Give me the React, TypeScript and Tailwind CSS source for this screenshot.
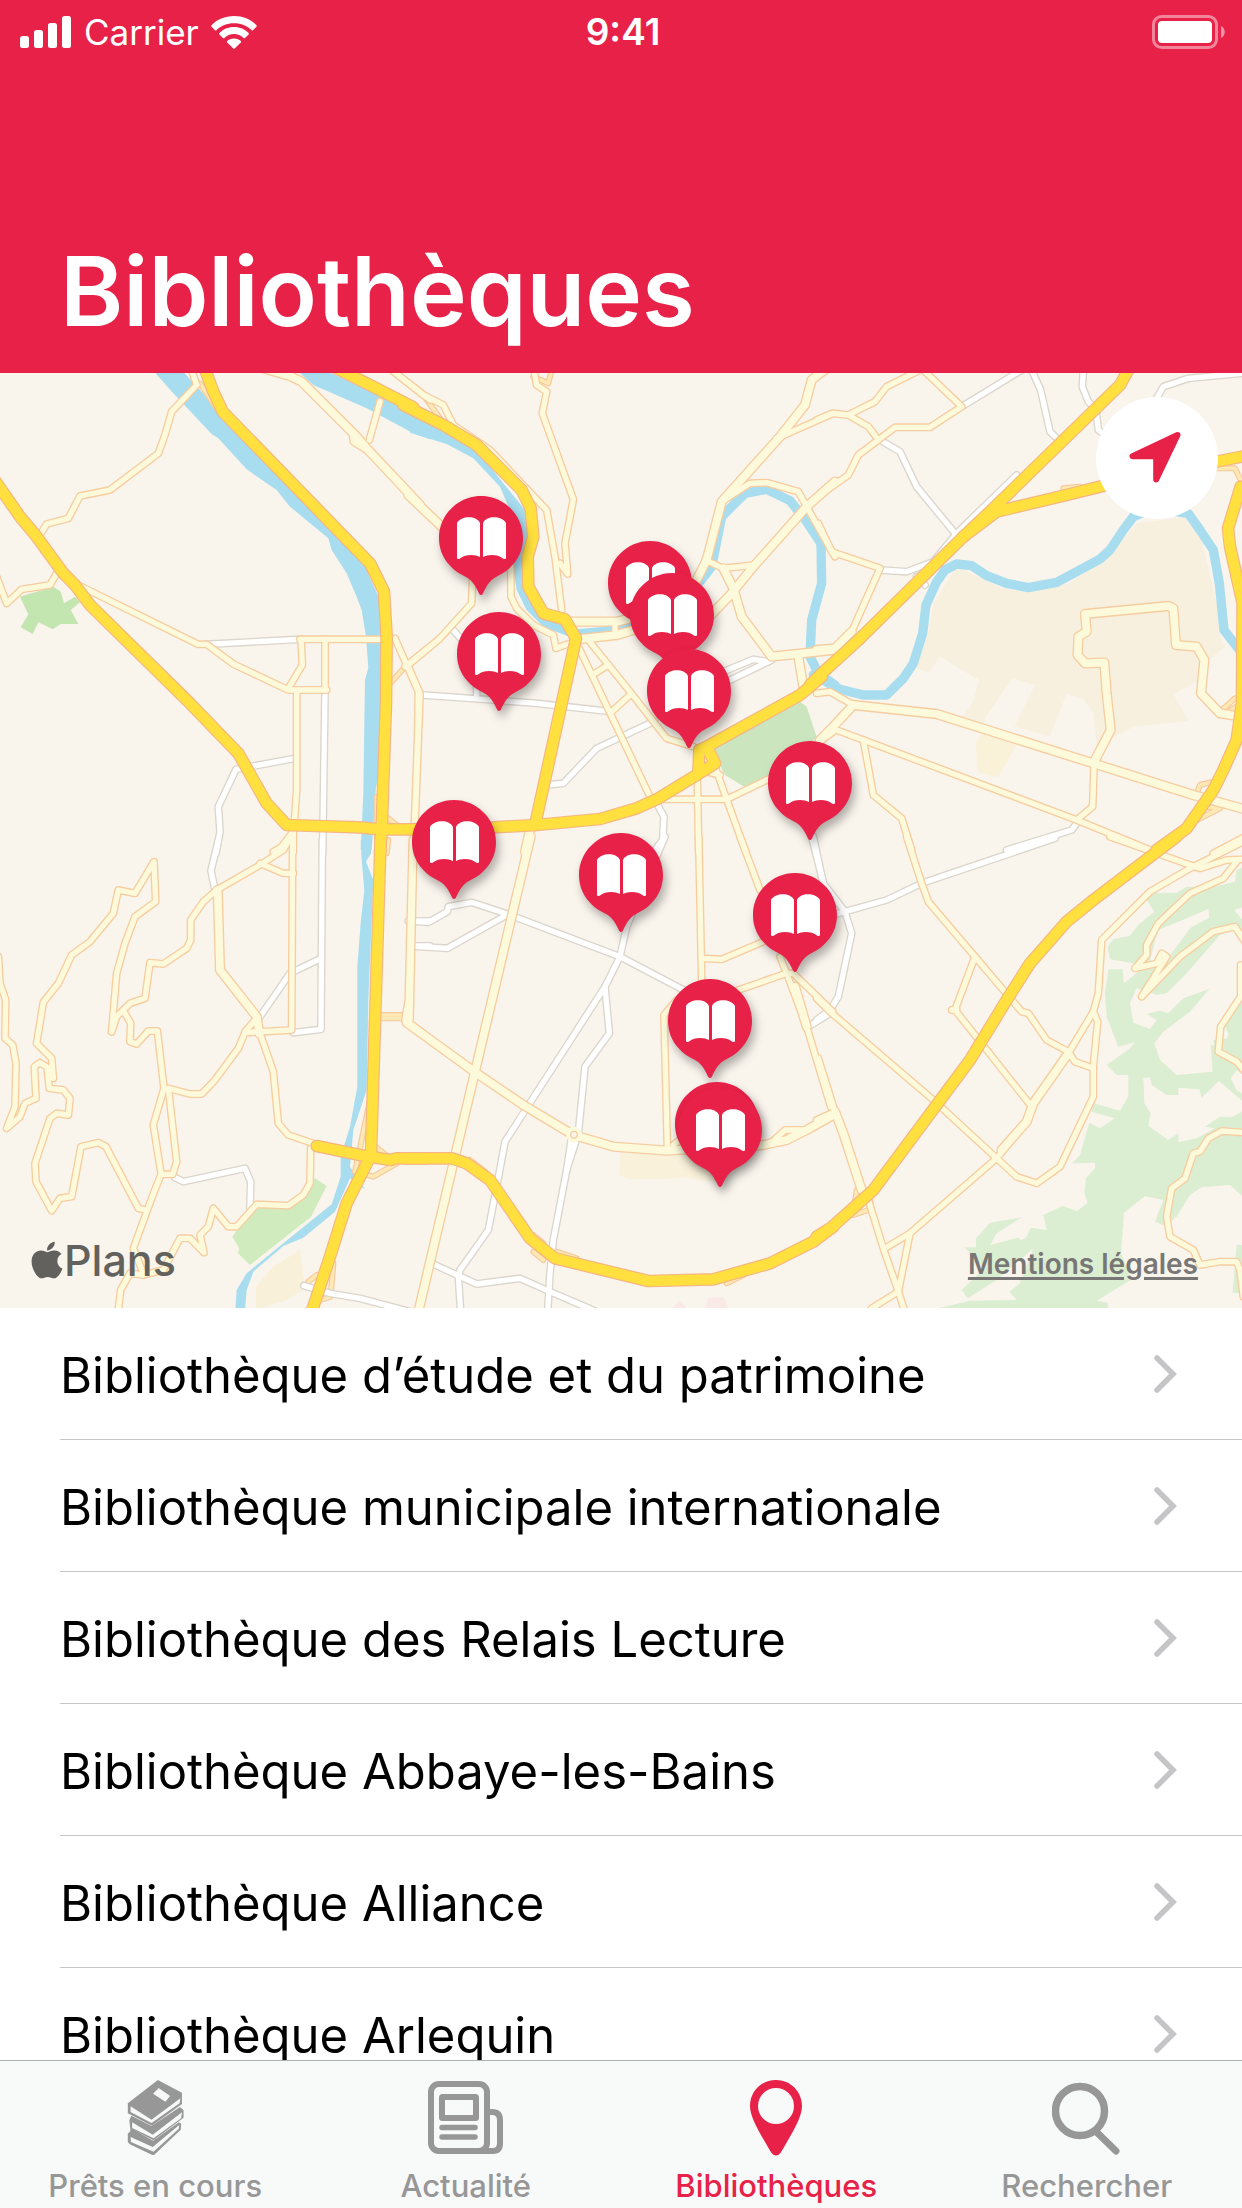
import React from "react";
import { FaApple } from "react-icons/fa";

type Tile = {
  x: number;
  y: number;
  water: string[];
  stream: string[];
  areas: [string, string][];
  link: string[];
  white: string[];
  cream: string[];
  wide: string[];
  yellow: string[];
};

/* Map tiles: coordinates are in thirds of a map pixel, from the tile's own corner. */
const tiles: Tile[] = [
  {
    x: 0,
    y: 0,
    water: [
      "458,0 545,0 600,60 650,120 1095,590 1140,690 1150,800 1140,1200 1128,1250 1115,1440 1082,1440 1090,1270 1095,930 1105,893 1098,800 1085,720 1070,680 1040,610 995,540 985,505 870,410 830,360 740,298 655,205 635,192 520,70",
      "890,0 975,0 1080,50 1290,150 1290,208 1240,190 1100,115 940,45",
    ],
    stream: [],
    areas: [["60,680 160,650 182,665 192,700 225,680 240,697 212,720 235,762 182,762 158,778 115,757 98,792 62,772 85,733", "#c3e6b1"]],
    link: ["600,40 650,115", "1130,1280 1130,1400", "1165,1345 1190,1365", "1220,885 1175,935"],
    white: ["620,823 900,808", "975,965 968,1450", "885,1165 750,1190 708,1198 655,1310 660,1385 648,1450"],
    cream: [
      "590,45 515,125 495,195 475,250 330,360 240,378 205,445 140,462 120,495",
      "575,0 590,45",
      "1140,95 1108,210",
      "1058,195 1060,215 1100,240",
      "1175,0 1290,90",
      "-10,620 20,700 65,658 150,645 170,610",
      "240,648 595,823 620,823 700,882 865,960 980,960",
      "900,808 1160,808",
      "903,808 907,885 865,955",
      "975,808 975,960",
      "890,960 890,1260 883,1360",
      "1185,805 1220,885 1255,965 1253,1100 1243,1370",
      "1290,830 1215,890",
      "875,1390 845,1430 820,1445",
      "880,1385 880,1445",
    ],
    wide: ["790,-5 870,18 905,35 1070,200 1100,235 1260,405"],
    yellow: [
      "-20,325 60,440 110,500 190,610 225,645 270,705 570,1000 715,1150 800,1300 860,1365 1080,1372 1145,1378 1270,1378",
      "612,-10 640,65 668,125 1110,580 1152,665 1160,800 1158,1000 1145,1378 1140,1450",
      "1000,-10 1130,55 1240,112",
    ],
  },
  {
    x: 410,
    y: 0,
    water: [
      "0,130 200,240 345,420 355,510 335,560 345,650 390,730 460,760 500,778 605,768 605,783 520,796 470,797 400,770 350,720 320,660 310,600 320,500 300,420 270,350 190,265 110,222 0,188",
    ],
    stream: ["600,780 720,745 850,660 905,590 935,440 1005,370 1070,358 1140,392 1190,455 1233,520 1235,640 1205,750 1200,860 1225,910 1275,945"],
    areas: [["905,1140 1170,995 1190,1010 1220,1100 1150,1180 1005,1252 945,1215", "#cbe5bf"]],
    link: ["40,75 90,145", "370,20 415,40 425,0"],
    white: [
      "125,775 165,820",
      "35,975 180,985 380,1000 595,1024",
      "200,940 200,985",
      "735,1053 560,1135 460,1240 410,1245",
      "940,905 1030,868 1075,875",
      "940,940 1085,870",
      "740,1300 762,1340 758,1410 735,1440",
    ],
    cream: [
      "-30,20 40,75 100,105 130,165 240,240 410,420 435,560 455,720",
      "372,0 380,45 410,65 397,130 490,388 465,520 473,612 450,580",
      "190,560 185,700 90,805 0,880",
      "-5,890 30,970 15,1370",
      "302,590 303,680 320,715 370,765 430,795 438,835 480,820",
      "935,395 1020,340 1070,338 1165,365 1190,410 1275,560",
      "1100,205 1270,130",
      "885,570 940,595 1035,585",
      "505,830 720,1280",
      "535,810 660,965 770,1105 850,1130",
      "555,910 595,885",
      "605,1025 660,975",
      "740,1288 950,1288 1080,1225 1270,1085",
      "862,1215 866,1445",
      "915,1190 950,1288 1007,1445",
      "870,1200 930,1215",
      "615,755 615,795",
    ],
    wide: [
      "-5,375 100,475 150,520",
      "480,755 620,755 700,735",
      "500,808 620,795 720,765",
      "850,650 890,570 935,395 1110,200 1185,105 1205,30 1240,0",
      "860,780 965,670 1030,590 1190,410 1275,335",
      "940,595 970,655 995,740 1085,860 1270,840",
      "1165,860 1180,950",
      "362,1370 345,1445",
    ],
    yellow: [
      "-20,105 100,165 200,225 335,360 362,415 370,500 353,560 355,650 400,730 465,748 498,805 375,1365",
      "0,1378 250,1372 380,1365 570,1347 680,1315 740,1288 860,1215 915,1180 890,1130",
      "865,1210 868,1140 890,1130 1170,975 1235,920",
    ],
  },
  {
    x: 820,
    y: 0,
    water: [],
    stream: [
      "-20,915 60,958 130,975 200,975 250,925 280,880 308,790 318,705 350,635 375,600 410,582 455,587 500,617 560,640 625,653 710,637 780,600 840,567 870,540 910,480 940,440 1000,415 1105,430 1140,480 1180,540 1198,640 1212,780 1258,840",
    ],
    areas: [
      [
        "405,600 430,600 545,655 625,668 750,640 870,555 950,460 1100,440 1145,510 1195,720 1200,800 1215,830 1165,870 1140,930 1060,972 1105,1052 940,1070 905,1088 830,1130 820,1025 790,988 740,970 690,1098 583,1070 645,945 577,925 495,1045 490,1070 425,1043 458,1000 478,930 425,900 360,858 327,908 290,893 325,790 340,700",
        "#f7f0df",
      ],
      ["490,1090 468,1115 472,1205 533,1222 590,1125", "#faf1d9"],
    ],
    link: ["1190,295 1245,295 1262,330", "1130,1270 1140,1245 1180,1235", "1130,1350 1200,1315 1150,1310", "1200,1025 1245,985", "1210,1035 1250,1010", "730,355 780,350"],
    white: [
      "425,110 605,0",
      "635,0 662,60 690,185 705,200",
      "790,0 787,50 805,95 828,120 835,180 860,200",
      "1010,85 1030,50 1105,25 1266,10",
      "180,210 240,245 290,350 405,490",
      "180,600 260,605 340,575 410,490 590,315",
      "290,620 315,645",
      "770,1360 755,1380 560,1440",
    ],
    cream: [
      "-10,150 35,130 85,135 165,95 200,50 300,0",
      "305,-5 425,110 330,172 225,172 175,210 115,255 85,315 -10,382",
      "-15,25 20,0",
      "85,135 145,170 175,210",
      "-5,460 35,545 180,595 95,785",
      "35,1075 130,1110 770,1350 990,1440",
      "130,1110 160,1275 245,1345 275,1440",
      "1275,1400 1180,1450",
      "822,1190 818,1310 770,1350",
      "-10,970 30,965 100,1005",
    ],
    wide: [
      "95,785 45,835 -10,840",
      "100,1005 350,1032 820,1180 1120,1275",
      "1120,1275 1275,1318",
      "100,1005 35,1075 0,1110",
      "820,1180 872,1080 860,970 853,878 795,880 773,855 775,800 800,785 795,732 1045,708 1060,715 1068,825 1130,830 1153,870 1143,970 1200,1030 1250,1038",
    ],
    yellow: [
      "-30,945 0,915 110,815 430,500 520,415 900,45 925,0",
      "430,500 530,425 760,370 860,345 1190,275 1275,258",
      "1262,350 1224,475 1230,530 1268,700 1266,1000 1250,1110 1210,1200 1180,1260 1100,1375 1010,1440",
    ],
  },
  {
    x: 0,
    y: 470,
    water: [
      "1082,0 1115,0 1113,40 1098,65 1120,120 1105,480 1100,750 1060,870 1050,980 1095,1048 1050,1015 1005,1115 910,1193 850,1218 760,1295 740,1350 735,1410 706,1410 710,1350 740,1300 850,1210 995,1093 1022,1010 1022,950 1050,860 1072,740 1072,380 1082,250 1093,150 1085,60",
    ],
    stream: [],
    areas: [
      ["945,1015 980,1038 933,1130 750,1275 714,1240 718,1225 697,1190 760,1100 870,1090 930,1040", "#d0ebbd"],
      ["768,1340 820,1280 900,1230 912,1320 910,1350 860,1380 790,1403 768,1403", "#f9f0da"],
    ],
    link: ["1140,535 1215,535", "1145,525 1215,525", "1110,780 1065,995 1120,1010 1190,970 1120,915", "1000,1270 992,1370 960,1380", "925,1325 950,1305", "1165,0 1160,40"],
    white: [
      "655,0 633,92 645,150",
      "967,0 963,568 880,578",
      "963,355 870,400 780,530",
      "525,1013 550,1025 735,985 752,1025 750,1105",
      "912,1337 990,1360 1080,1375 1230,1415",
      "1225,243 1290,243",
      "1240,318 1290,318",
    ],
    cream: [
      "335,575 350,400 375,310 405,230 467,185 462,65 405,160 355,150 340,220 270,305 215,345 175,430 130,487 110,610 155,655 160,715 140,680 120,668 103,680 108,775 75,790 60,830 20,865 45,800 48,670 38,615 15,595 17,480 0,430 -5,350",
      "142,690 148,745 190,750 210,775 205,825 170,820 150,835 105,970 108,1025 155,1112 180,1075 215,1070 243,920 295,908 318,920 415,1105 430,1108",
      "335,575 350,530 390,490 435,475 450,368 490,372 560,325 572,300 572,240 610,185 650,150 780,75 850,30 870,-5",
      "375,520 392,550 390,605 410,612 445,573 472,573 492,745 460,855 483,1000",
      "483,1003 455,1075 400,1225 430,1300",
      "390,1300 362,1350 355,1410",
      "780,70 850,100 880,100",
      "878,-10 875,570 735,578 715,625 645,720 605,762 570,762 505,745 530,965 518,1003 483,1003",
      "780,580 820,695 835,850 865,885 945,912",
      "932,925 930,1030 910,1065 865,1097 770,1093 710,1160 685,1160 640,1105 625,1160 600,1185 612,1238 570,1195 540,1195 490,1290 430,1305 390,1300",
      "735,575 770,535",
      "1237,0 1225,480 1215,540 1270,580",
      "1265,1360 1255,1410",
    ],
    wide: ["653,150 660,390 770,530 778,580"],
    yellow: ["1142,-10 1113,940 1108,955 1040,1090 990,1250 935,1415", "950,918 1080,945 1170,960 1190,955 1280,955"],
  },
  {
    x: 410,
    y: 470,
    water: [],
    stream: [],
    areas: [
      ["632,935 900,945 930,1022 885,1022 830,1012 760,1018 655,1018 628,1005", "#f9f1da"],
      ["788,1405 808,1382 832,1405", "#faeae7"],
      ["885,1405 895,1375 940,1370 955,1405", "#faeae7"],
    ],
    link: ["180,960 225,995", "370,1185 400,1210", "440,1235 500,1255", "400,1260 370,1235", "950,1330 1000,1305"],
    white: [
      "0,243 55,247 112,215 115,200 185,187 300,225 630,350 830,455",
      "0,318 112,325 290,225",
      "765,-10 650,260 630,350 585,440 285,905 260,1040 235,1170 150,1290 145,1310 152,1415",
      "585,440 598,580 525,680 505,880 470,990 430,1200 420,1300 413,1415",
      "485,890 470,990",
      "65,1270 200,1332 330,1315 420,1355 560,1415",
      "1205,-10 1240,130",
      "1195,560 1260,520",
    ],
    cream: [
      "12,-10 0,540",
      "866,-10 875,420",
      "875,355 935,358 1060,305",
      "800,480 762,525 772,920",
      "985,450 1130,400 1150,400 1268,515",
      "990,-10 1050,150",
      "1110,350 1130,400 1190,560 1262,800",
      "1080,912 1125,870 1190,870",
      "790,915 820,890",
    ],
    wide: ["-10,548 200,700 340,795 490,885 610,920 770,932 1060,915 1130,900 1190,870 1270,825", "362,-10 305,230 130,970 25,1415", "1155,440 1190,560"],
    yellow: ["-10,955 125,955 170,970 240,1020 360,1195 435,1255 715,1323 910,1318 1080,1270 1210,1205 1270,1160"],
  },
  {
    x: 820,
    y: 470,
    water: [],
    stream: [],
    areas: [
      [
        "1275,80 1250,90 1245,125 1180,140 1100,140 1070,158 985,158 980,180 1003,215 955,255 930,287 880,298 863,320 870,358 940,370 955,395 912,430 908,388 865,388 855,460 860,530 895,620 945,607 930,625 860,675 890,705 925,705 925,770 900,812 820,790 815,815 885,835 840,865 808,848 780,945 757,970 825,968 825,985 798,1015 793,1060 803,1088 772,1113 728,1098 670,1125 680,1170 632,1163 620,1190 530,1250 425,1350 443,1375 530,1320 640,1225 600,1330 568,1355 590,1380 450,1382 355,1405 865,1405 863,1388 830,1382 935,1318 903,1240 912,1118 975,1068 1030,1080 1005,1145 1035,1158 1070,1130 1110,1065 1145,1042 1230,1035 1275,1075",
        "#dbeed2",
      ],
      ["433,1222 468,1222 468,1195 510,1148 605,1132 530,1180 510,1215 595,1193 620,1215 500,1290", "#dbeed2"],
      ["1250,1215 1275,1215 1275,1360 1238,1358", "#dbeed2"],
      ["1015,270 1100,235 1165,207 1168,233 1110,265 1070,320 1030,370 985,380 1000,320", "#f9f4ec"],
      ["950,445 1010,465 1040,460 1100,400 1200,285 1245,270 1275,320 1275,500 1228,570 1215,620 1172,615 1178,695 1070,705 1020,660 1003,610 1030,575 1110,515 1168,447 1090,475 1045,520 1020,512 980,522 1010,540 990,567 940,548 930,490", "#f9f4ec"],
      ["970,715 990,712 995,735 1040,765 1075,765 1075,743 1138,748 1145,773 1197,723 1275,790 1275,810 1235,832 1200,830 1155,860 1185,865 1130,895 1075,907 1075,880 1045,900 985,858 992,820 973,790", "#f9f4ec"],
      ["1150,15 1275,75 1275,80 1215,60", "#f9f4ec"],
      ["1243,210 1275,200 1275,250", "#f9f4ec"],
      ["833,780 870,710 885,725 857,765 905,795 890,810 850,790", "#f9f4ec"],
      ["1180,600 1235,595 1275,615 1275,670 1240,710 1200,690", "#dbeed2"],
      ["1232,715 1250,690 1275,710 1275,765 1250,750", "#f9f4ec"],
      ["1245,490 1275,470 1275,610 1235,600 1215,560", "#dbeed2"],
    ],
    link: ["110,1050 100,1125 145,1110", "150,1070 155,1110"],
    white: ["705,-5 305,130 200,180 75,215 0,235", "-20,-10 10,130 75,215 95,280 55,470 30,510 -10,540"],
    cream: [
      "260,-10 305,130 325,185 465,350 605,515 625,520 680,600 745,635 765,665 820,685",
      "465,350 405,510 635,800",
      "-10,475 30,515 340,780 530,955 590,1010 650,1030 720,980 820,770 820,680 833,545 820,515 745,640",
      "600,870 530,955 270,1180 195,1225",
      "820,515 835,460 845,300 990,155 1110,85 1270,5",
      "870,-10 1110,75 1140,85 1220,60 1275,58",
      "1250,65 1210,115 1110,160 1015,250 980,315 980,345 945,385 1010,370 1025,340 1040,350 965,470 1080,350 1180,275 1245,260 1275,305",
      "-5,655 45,815",
      "145,1080 190,1225 235,1355 255,1415",
      "-10,840 45,815",
      "270,1180 235,1355 155,1405",
      "1262,375 1262,470 1202,560 1195,635 1250,665 1275,695",
      "1275,878 1205,873 1165,895 1140,935 1120,940 1095,1015 1055,1045 1040,1130 1050,1190 1120,1230 1140,1275 1200,1265 1250,1265 1260,1290 1270,1370",
      "395,510 410,510",
    ],
    wide: ["45,815 70,880 125,1050", "745,640 640,790 620,845 545,930"],
    yellow: ["-10,1190 35,1162 160,1050 450,660 560,480 630,370 740,245 820,180 1070,-10"],
  },
];

const tileShift = (t: Tile) => `translate(${t.x} ${t.y - 3}) scale(0.33333)`;

function Roads({ kind, color, width }: { kind: "stream" | "link" | "white" | "cream" | "wide" | "yellow"; color: string; width: number }) {
  return (
    <g fill="none" stroke={color} strokeWidth={width} strokeLinejoin="round" strokeLinecap="round">
      {tiles.map((t, i) => (
        <g key={i} transform={tileShift(t)}>
          {t[kind].map((p, j) => (
            <polyline key={j} points={p} />
          ))}
        </g>
      ))}
    </g>
  );
}

function MapDrawing() {
  return (
    <svg viewBox="0 0 1242 935" preserveAspectRatio="xMidYMid slice" className="block h-full w-full" aria-hidden="true">
      <rect width="1242" height="935" fill="#f9f4ec" />
      {tiles.map((t, i) => (
        <g key={i} transform={tileShift(t)}>
          {t.areas.map(([p, fill], j) => (
            <polygon key={j} points={p} fill={fill} />
          ))}
          {t.water.map((p, j) => (
            <polygon key={j} points={p} fill="#a8dcef" />
          ))}
        </g>
      ))}
      <Roads kind="stream" color="#a8dcef" width={28} />
      <Roads kind="link" color="#f6c99c" width={18} />
      <Roads kind="link" color="#fee9b4" width={11} />
      <Roads kind="white" color="#dbd6cc" width={24} />
      <Roads kind="white" color="#ffffff" width={16} />
      <Roads kind="wide" color="#f6cda0" width={31} />
      <Roads kind="cream" color="#f6cda0" width={24} />
      <Roads kind="wide" color="#fdfadb" width={23} />
      <Roads kind="cream" color="#fdfadb" width={16} />
      <g transform="translate(410 467) scale(0.33333)">
        <circle cx="492" cy="884" r="24" fill="#fdfadb" />
        <circle cx="492" cy="884" r="10" fill="#f9f4ec" stroke="#f6cda0" strokeWidth="4" />
      </g>
      <Roads kind="yellow" color="#f6b583" width={38} />
      <Roads kind="yellow" color="#ffe03f" width={31} />
    </svg>
  );
}

const pins = [
  { name: "Saint-Laurent", x: 481, y: 538 },
  { name: "Centre de ressources", x: 499, y: 654 },
  { name: "Étude et patrimoine", x: 650, y: 583 },
  { name: "Municipale internationale", x: 672, y: 615 },
  { name: "Centre-ville", x: 689, y: 691 },
  { name: "Abbaye-les-Bains", x: 810, y: 783 },
  { name: "Eaux-Claires", x: 454, y: 842 },
  { name: "Alliance", x: 621, y: 875 },
  { name: "Teisseire", x: 795, y: 915 },
  { name: "Relais Lecture", x: 710, y: 1021 },
  { name: "Kateb Yacine", x: 717, y: 1124 },
  { name: "Arlequin", x: 720, y: 1130 },
];

function MapPin({ name, x, y }: { name: string; x: number; y: number }) {
  return (
    <button
      type="button"
      aria-label={name}
      className="absolute -translate-x-1/2 -translate-y-[42px]"
      style={{ left: `${(x / 1242) * 100}%`, top: `${((y - 373) / 935) * 100}%` }}
    >
      <svg width="84" height="100" viewBox="0 0 84 100" className="block overflow-visible drop-shadow-[3px_6px_5px_rgba(0,0,0,0.3)]">
        <path
          d="M42 0C65 0 84 19 84 42C84 61 72 74 57 81C50 85 47 91 44 97.500Q42 100.500 40 97.500C37 91 34 85 27 81C12 74 0 61 0 42C0 19 19 0 42 0Z"
          fill="#e82148"
        />
        <path d="M18 27C22 20 37 19 41 27V61C36 58 26 58 21 62.500Q18 64 18 61.500Z" fill="#fff" />
        <path d="M67 27C63 20 48 19 44 27V61C49 58 59 58 64 62.500Q67 64 67 61.500Z" fill="#fff" />
      </svg>
    </button>
  );
}

function StatusBar() {
  return (
    <div className="grid grid-cols-3 items-center pt-3 pr-4 pl-5">
      <div className="flex items-center gap-3">
        <svg width="52" height="32" viewBox="0 0 52 32" fill="#fff" role="img" aria-label="Signal">
          <rect x="0" y="0" width="0" height="0" />
          <rect x="0" y="20" width="9" height="12" rx="2.500" />
          <rect x="14" y="14" width="9" height="18" rx="2.500" />
          <rect x="28" y="7" width="9" height="25" rx="2.500" />
          <rect x="42" y="0" width="9" height="32" rx="2.500" />
        </svg>
        <span className="text-[35px] leading-10 font-normal">Carrier</span>
        <svg width="46" height="33" viewBox="0 0 46 33" fill="#fff" role="img" aria-label="Wi-Fi">
          <path d="M23 0C32 0 40 3.500 45.500 9.200Q46 10 45.400 10.700L42 14.200Q41.300 14.800 40.600 14.200C36 9.800 30 7.300 23 7.300S10 9.800 5.400 14.200Q4.700 14.800 4 14.200L.6 10.700Q0 10 .5 9.200C6 3.500 14 0 23 0Z" />
          <path d="M23 11C29 11 34 13.300 37.600 17Q38.200 17.700 37.600 18.400L34 22Q33.300 22.600 32.600 22C30 19.500 26.800 18 23 18S16 19.500 13.400 22Q12.700 22.600 12 22L8.400 18.400Q7.800 17.700 8.400 17C12 13.300 17 11 23 11Z" />
          <path d="M23 22.500C26 22.500 28.200 23.500 29.800 25Q30.400 25.700 29.800 26.400L23.700 32.600Q23 33.200 22.300 32.600L16.200 26.400Q15.600 25.700 16.200 25C17.800 23.500 20 22.500 23 22.500Z" />
        </svg>
      </div>
      <span className="text-center text-[37px] leading-10 font-semibold">9:41</span>
      <svg width="74" height="34" viewBox="0 0 74 34" className="justify-self-end" role="img" aria-label="Batterie">
        <rect x="1.500" y="1.500" width="63" height="31" rx="8" fill="none" stroke="#fff" strokeOpacity="0.45" strokeWidth="3" />
        <rect x="6" y="6" width="54" height="22" rx="4" fill="#fff" />
        <path d="M69 11C74 13 74 21 69 23Z" fill="#fff" fillOpacity="0.5" />
      </svg>
    </div>
  );
}

const libraries = [
  "Bibliothèque d’étude et du patrimoine",
  "Bibliothèque municipale internationale",
  "Bibliothèque des Relais Lecture",
  "Bibliothèque Abbaye-les-Bains",
  "Bibliothèque Alliance",
  "Bibliothèque Arlequin",
];

function LibraryRow({ name }: { name: string }) {
  return (
    <li className="pl-[60px]">
      <a href="#" className="flex h-[132px] items-center justify-between border-b border-[#c6c6c8] pr-16">
        <span className="pt-1 text-[49px] leading-[60px] whitespace-nowrap text-black">{name}</span>
        <svg width="24" height="38" viewBox="0 0 24 38" fill="none" aria-hidden="true">
          <path d="M3 3L19 19L3 35" stroke="#c5c5c7" strokeWidth="5.500" strokeLinecap="round" strokeLinejoin="miter" />
        </svg>
      </a>
    </li>
  );
}

function BooksIcon() {
  return (
    <svg width="57" height="76" viewBox="0 0 57 76" aria-hidden="true">
      <g transform="scale(0.39540 0.33333) translate(-321 -119)">
        <path d="M323 280L329 273L330 262L387 301L452 246L458 250L457 268L390 343L385 344L328 312L323 304Z" fill="currentColor" />
        <path d="M330 290L386 320L453 254L452 265L388 334L331 305Z" fill="#f7f8f8" />
        <path d="M327 240L332 226L383 257L455 200L464 210V232L388 300L329 264Z" fill="currentColor" />
        <path d="M334 246L386 283L460 216L458 234L388 294L334 263Z" fill="#f7f8f8" />
        <path d="M399 119L460 157V191L384 256L323 219V189Z" fill="currentColor" />
        <path d="M330 198L383 238L456 174L454 189L383 248L330 215Z" fill="#f7f8f8" />
        <path d="M401 143L430 167L418 184L387 160Z" fill="#f7f8f8" />
      </g>
    </svg>
  );
}

function NewsIcon() {
  return (
    <svg width="76" height="76" viewBox="0 0 76 76" fill="none" stroke="currentColor" strokeWidth="6" aria-hidden="true">
      <rect x="3" y="4" width="56" height="67" rx="8" />
      <rect x="14" y="17" width="34" height="21" rx="0.500" />
      <path d="M14 47.500H47M14 57H47" strokeWidth="5.500" strokeLinecap="round" />
      <path d="M60 32H64Q72 32 72 40V63Q72 71 65 71H50" />
    </svg>
  );
}

function PlaceIcon() {
  return (
    <svg width="52" height="76" viewBox="0 0 52 76" aria-hidden="true">
      <path
        fillRule="evenodd"
        fill="currentColor"
        d="M26 0C40.500 0 52 11.500 52 26C52 37 43 52 30.500 73Q26 78 21.500 73C9 52 0 37 0 26C0 11.500 11.500 0 26 0ZM26 8A18 18 0 1 0 26 44A18 18 0 1 0 26 8Z"
      />
    </svg>
  );
}

function SearchIcon() {
  return (
    <svg width="70" height="76" viewBox="0 0 70 76" fill="none" stroke="currentColor" aria-hidden="true">
      <circle cx="28" cy="31" r="24.500" strokeWidth="7.500" />
      <path d="M45.500 53L64 71" strokeWidth="7" strokeLinecap="round" />
    </svg>
  );
}

const tabs = [
  { label: "Prêts en cours", Icon: BooksIcon, active: false },
  { label: "Actualité", Icon: NewsIcon, active: false },
  { label: "Bibliothèques", Icon: PlaceIcon, active: true },
  { label: "Rechercher", Icon: SearchIcon, active: false },
];

export default function App() {
  return (
    <div className="flex h-screen flex-col overflow-hidden bg-white font-['Inter','Liberation_Sans',sans-serif]">
      <header className="flex h-[373px] shrink-0 flex-col justify-between bg-[#e82148] text-white">
        <StatusBar />
        <h1 className="px-[60px] pb-[22px] text-[96px] leading-[120px] font-semibold">Bibliothèques</h1>
      </header>

      <section aria-label="Plan" className="relative aspect-[1242/935] w-full shrink-0 overflow-hidden">
        <MapDrawing />
        {pins.map((p) => (
          <MapPin key={p.name} {...p} />
        ))}
        <button type="button" aria-label="Me localiser" className="absolute top-6 right-6 flex size-[122px] items-center justify-center rounded-full bg-white">
          <svg width="122" height="122" viewBox="0 0 122 122" aria-hidden="true">
            <path d="M81.500 38L36.500 59.200L60.200 59.200L60.200 82.500Z" fill="#e82148" stroke="#e82148" strokeWidth="6" strokeLinejoin="round" />
          </svg>
        </button>
        <div className="absolute bottom-[18px] left-[26px] flex items-center text-[#62615d]">
          <FaApple className="-mr-1 size-[42px]" aria-hidden="true" />
          <span className="text-[43px] leading-[60px] font-medium">Plans</span>
        </div>
        <a href="#" className="absolute right-11 bottom-[26px] text-[28px] leading-9 font-semibold text-[#787775] underline decoration-[3px] underline-offset-[3px]">
          Mentions légales
        </a>
      </section>

      <ul className="min-h-0 flex-1 overflow-y-auto [scrollbar-width:none]">
        {libraries.map((name) => (
          <LibraryRow key={name} name={name} />
        ))}
      </ul>

      <nav className="grid h-[148px] shrink-0 grid-cols-4 border-t border-[#adb0ae] bg-[#f8f9f9]">
        {tabs.map(({ label, Icon, active }) => (
          <button key={label} type="button" className={active ? "flex flex-col items-center pt-[19px] text-[#e82148]" : "flex flex-col items-center pt-[19px] text-[#969796]"}>
            <Icon />
            <span className="mt-3 text-[31px] leading-9 font-medium whitespace-nowrap">{label}</span>
          </button>
        ))}
      </nav>
    </div>
  );
}
